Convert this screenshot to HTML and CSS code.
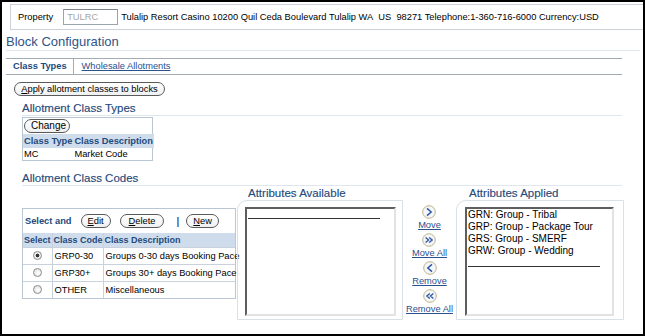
FILE: index.html
```html
<!DOCTYPE html>
<html lang="en">
<head>
    <meta charset="UTF-8">
    <title>Block Configuration</title>
    <link rel="stylesheet" href="styles.css">
</head>
<body>
<div class="frame">
    <div class="prop-bar">
        <span class="prop-label">Property</span>
        <span class="prop-input">TULRC</span>
        <span class="prop-info">Tulalip Resort Casino 10200 Quil Ceda Boulevard Tulalip WA&nbsp;&nbsp;US&nbsp;&nbsp;98271 Telephone:1-360-716-6000 Currency:USD</span>
    </div>

    <h1 class="page-title">Block Configuration</h1>

    <div class="tabs">
        <span class="tab active">Class Types</span>
        <a class="tab link">Wholesale Allotments</a>
    </div>

    <button class="btn btn-apply"><u>A</u>pply allotment classes to blocks</button>

    <!-- Class types -->
    <h2 class="sub-head">Allotment Class Types</h2>
    <div class="types-box">
        <button class="btn btn-change">Change</button>
        <table class="grid types-grid">
            <tr><th>Class Type</th><th>Class Description</th></tr>
            <tr><td>MC</td><td>Market Code</td></tr>
        </table>
    </div>

    <!-- Class codes -->
    <h2 class="sub-head codes-head">Allotment Class Codes</h2>
    <div class="codes">
        <div class="codes-left">
            <div class="codes-box">
                <div class="toolbar">
                    <span class="select-and">Select and</span>
                    <button class="btn btn-small"><u>E</u>dit</button>
                    <button class="btn btn-small btn-delete"><u>D</u>elete</button>
                    <span class="pipe">|</span>
                    <button class="btn btn-small"><u>N</u>ew</button>
                </div>
                <table class="grid codes-grid">
                    <tr><th class="col-sel">Select</th><th class="col-code">Class Code</th><th>Class Description</th></tr>
                    <tr><td class="col-sel"><span class="radio checked"></span></td><td>GRP0-30</td><td>Groups 0-30 days Booking Pace</td></tr>
                    <tr><td class="col-sel"><span class="radio"></span></td><td>GRP30+</td><td>Groups 30+ days Booking Pace</td></tr>
                    <tr><td class="col-sel"><span class="radio"></span></td><td>OTHER</td><td>Miscellaneous</td></tr>
                </table>
            </div>
        </div>

        <div class="attr-col attr-available">
            <div class="attr-title">Attributes Available</div>
            <div class="attr-panel">
                <div class="listbox">
                    <div class="blank-opt"></div>
                </div>
            </div>
        </div>

        <div class="shuttle">
            <div class="shuttle-item">
                <svg width="14" height="14" viewBox="0 0 14 14"><circle cx="7" cy="7" r="6.3" fill="#f3f6fb" stroke="#c2b383"/><path d="M5 3.4 L9.2 7 L5 10.6" fill="none" stroke="#2d55a0" stroke-width="1.4"/></svg>
                <a class="link">Move</a>
            </div>
            <div class="shuttle-item">
                <svg width="14" height="14" viewBox="0 0 14 14"><circle cx="7" cy="7" r="6.3" fill="#f3f6fb" stroke="#c2b383"/><path d="M3.6 4.5 L6.6 7 L3.6 9.5 M7.2 4.5 L10.2 7 L7.2 9.5" fill="none" stroke="#2d55a0" stroke-width="1.3"/></svg>
                <a class="link">Move All</a>
            </div>
            <div class="shuttle-item">
                <svg width="14" height="14" viewBox="0 0 14 14"><circle cx="7" cy="7" r="6.3" fill="#f3f6fb" stroke="#c2b383"/><path d="M9 3.4 L4.8 7 L9 10.6" fill="none" stroke="#2d55a0" stroke-width="1.4"/></svg>
                <a class="link">Remove</a>
            </div>
            <div class="shuttle-item">
                <svg width="14" height="14" viewBox="0 0 14 14"><circle cx="7" cy="7" r="6.3" fill="#f3f6fb" stroke="#c2b383"/><path d="M6.8 4.5 L3.8 7 L6.8 9.5 M10.4 4.5 L7.4 7 L10.4 9.5" fill="none" stroke="#2d55a0" stroke-width="1.3"/></svg>
                <a class="link">Remove All</a>
            </div>
        </div>

        <div class="attr-col attr-applied">
            <div class="attr-title">Attributes Applied</div>
            <div class="attr-panel">
                <div class="listbox">
                    <div class="opt">GRN: Group - Tribal</div>
                    <div class="opt">GRP: Group - Package Tour</div>
                    <div class="opt">GRS: Group - SMERF</div>
                    <div class="opt">GRW: Group - Wedding</div>
                    <div class="blank-opt"></div>
                </div>
            </div>
        </div>
    </div>
</div>
</body>
</html>
```

FILE: styles.css
```css
:root {
    --title-color: #2f5487;
    --head-color: #244a7c;
    --link-color: #2b4f8f;
    --rule-light: #dfe6ee;
    --rule-dark: #a3acb5;
    --grid-border: #b9c6d4;
    --header-bg: #cfdcec;
}

* {
    box-sizing: border-box;
    margin: 0;
    padding: 0;
}

html, body {
    height: 100%;
}

body {
    font-family: "Liberation Sans", Arial, sans-serif;
    font-size: 9.3px;
    color: #000;
    background: #fff;
}

.frame {
    height: 100%;
    border: 2px solid #000;
    display: flex;
    flex-direction: column;
    align-items: flex-start;
}

/* property bar */
.prop-bar {
    align-self: stretch;
    margin: 2px 0 0 8px;
    height: 26px;
    border: 1px solid #ccd2d8;
    border-right: none;
    display: flex;
    align-items: center;
    padding-left: 7px;
}

.prop-label {
    margin-right: 10px;
}

.prop-input {
    width: 55px;
    height: 16px;
    border: 1px solid #9ba3ab;
    border-top-color: #7d858d;
    color: #a6a6a6;
    padding: 1px 3px;
    line-height: 12px;
    margin-right: 3px;
}

/* title */
.page-title {
    align-self: stretch;
    margin: 4px 3px 0 4px;
    font-size: 13px;
    font-weight: normal;
    color: var(--title-color);
    line-height: 15px;
    padding-bottom: 1px;
    border-bottom: 1px solid var(--rule-light);
}

/* tabs */
.tabs {
    align-self: stretch;
    margin: 7px 21px 0 4px;
    height: 17px;
    border-top: 1px solid var(--rule-dark);
    border-bottom: 1px solid var(--rule-dark);
    display: flex;
    align-items: stretch;
}

.tab {
    line-height: 15px;
    padding: 0 7px;
}

.tab.active {
    font-weight: bold;
    color: var(--head-color);
    border-right: 1px solid var(--rule-dark);
    padding-right: 6px;
}

.tab.link {
    padding-left: 8px;
}

.link {
    color: var(--link-color);
    text-decoration: underline;
}

/* buttons */
.btn {
    font-family: inherit;
    font-size: 9.3px;
    color: #000;
    height: 14px;
    line-height: 12px;
    border: 1px solid #5a5a5a;
    border-radius: 7px;
    background: linear-gradient(#ffffff, #eef0f2);
    padding: 0 6px;
    white-space: nowrap;
}

.btn-apply {
    margin: 7px 0 0 12px;
    width: 151px;
}

.btn-change {
    margin: 1px 0 0 1px;
    width: 46px;
    font-size: 10px;
}

.btn-small {
    padding: 0 6px;
}

.btn-delete {
    padding: 0 8px;
}

/* sub headings */
.sub-head {
    align-self: stretch;
    margin: 5px 21px 0 20px;
    font-size: 11.5px;
    font-weight: normal;
    color: var(--head-color);
    -webkit-text-stroke: 0.15px var(--head-color);
    line-height: 14px;
    padding-bottom: 0;
    border-bottom: 1px solid var(--rule-light);
}

.codes-head {
    margin-top: 10px;
}

/* grids */
.types-box {
    margin: 1px 0 0 20px;
    width: 131px;
    border: 1px solid var(--grid-border);
}

.grid {
    border-collapse: collapse;
    width: 100%;
    font-size: 9.3px;
}

.grid th {
    background: var(--header-bg);
    color: var(--head-color);
    font-weight: bold;
    text-align: left;
    padding: 0 1px;
    height: 14px;
    white-space: nowrap;
}

.grid td {
    padding: 0 1px;
    white-space: nowrap;
}

.types-grid {
    margin-top: 1px;
}

.types-grid td {
    height: 12px;
}

/* class codes row */
.codes {
    display: flex;
    margin-left: 20px;
    align-items: flex-start;
}

.codes-left {
    width: 215px;
    padding-top: 22px;
}

.codes-box {
    width: 214px;
    border: 1px solid var(--grid-border);
}

.toolbar {
    display: flex;
    align-items: center;
    height: 24px;
    padding-left: 2px;
    gap: 9px;
}

.select-and {
    font-weight: bold;
    color: var(--head-color);
    margin-right: 0;
}

.pipe {
    color: #000;
    margin: 0 -2px 0 3px;
    font-size: 11px;
}

.codes-grid {
    table-layout: fixed;
}

.codes-grid th {
    font-size: 9px;
}

.codes-grid td {
    height: 17px;
    border-top: 1px solid #c9d2dc;
    padding-left: 2px;
}

.codes-grid .col-sel {
    width: 29px;
    text-align: center;
}

.codes-grid th + th,
.codes-grid td + td {
    border-left: 1px solid #c9d2dc;
}

.codes-grid .col-code {
    width: 51px;
}

.radio {
    display: inline-block;
    width: 9px;
    height: 9px;
    border: 1px solid #8c8c8c;
    border-radius: 50%;
    background: radial-gradient(circle at 60% 60%, #ffffff, #dcdcdc);
    vertical-align: middle;
    position: relative;
    top: -1px;
}

.radio.checked {
    background: radial-gradient(circle, #333 0, #333 1.6px, #f2f2f2 2.2px, #dcdcdc);
}

/* attribute shuttle */
.attr-col {
    display: flex;
    flex-direction: column;
}

.attr-title {
    font-size: 11.5px;
    color: var(--head-color);
    -webkit-text-stroke: 0.15px var(--head-color);
    line-height: 14px;
}

.attr-available {
    width: 166px;
}

.attr-available .attr-title {
    padding-left: 11px;
}

.attr-applied {
    width: 168px;
}

.attr-applied .attr-title {
    padding-left: 13px;
}

.attr-panel {
    height: 120px;
    border: 1px solid #d9e0e8;
    border-top-left-radius: 10px;
    padding: 6px 6px 3px 7px;
}

.listbox {
    height: 100%;
    background: #fff;
    border: 2px solid;
    border-color: #5e5e5e #e2e2e2 #e2e2e2 #5e5e5e;
    padding: 0 1px;
}

.attr-applied .listbox {
    margin-left: 1px;
    margin-right: 3px;
}

.opt {
    font-size: 10px;
    line-height: 12px;
    white-space: nowrap;
}

.blank-opt {
    width: 132px;
    height: 10px;
    border-bottom: 1px solid #333;
}

.shuttle {
    width: 53px;
    padding-top: 19px;
    display: flex;
    flex-direction: column;
    align-items: center;
    gap: 1px;
}

.shuttle-item {
    display: flex;
    flex-direction: column;
    align-items: center;
    height: 27px;
}

.shuttle-item svg {
    display: block;
}

.shuttle-item .link {
    line-height: 13px;
    white-space: nowrap;
}
```
